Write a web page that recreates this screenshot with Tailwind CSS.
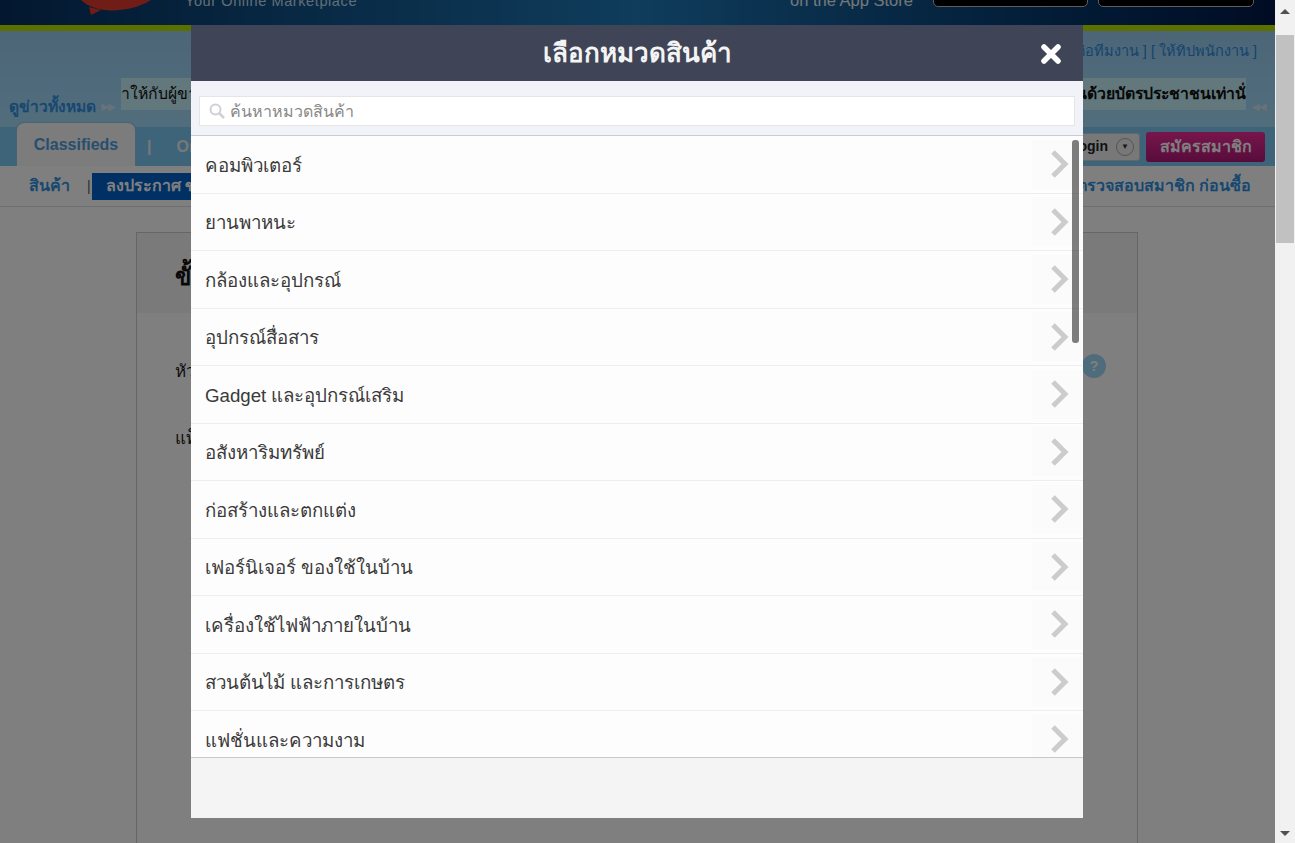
<!DOCTYPE html>
<html lang="th">
  <head>
    <meta charset="UTF-8" />
    <title>เลือกหมวดสินค้า</title>
    <script src="https://cdn.jsdelivr.net/npm/@tailwindcss/browser@4"></script>
  </head>
  <body class="h-[843px] w-[1295px] overflow-hidden bg-white font-['Liberation_Sans','Noto_Sans',sans-serif]">
    <div class="relative flex h-[843px] w-[1295px]">
      <!-- Page behind the dialog -->
      <div class="flex h-[843px] w-[1275px] flex-col overflow-hidden">
        <!-- Top banner -->
        <div class="relative h-[25px] shrink-0 bg-gradient-to-r from-[#06305f] via-[#1f7ab8] to-[#021848]">
          <svg class="absolute left-[75px] top-0 h-[16px] w-[80px]" viewBox="0 0 80 16">
            <path d="M6 0 C14 8 30 12 44 10 C58 9 68 5 76 0 Z M14 7 L16 15 L26 10 Z" fill="#e03a30" />
          </svg>
          <span class="absolute left-[185px] top-[-9px] text-[14.5px] tracking-[0.6px] text-[#c4dcec]">Your Online Marketplace</span>
          <span class="absolute left-[790px] top-[-12px] text-[16.5px] text-[#e8eef4]">on the App Store</span>
          <div class="absolute left-[933px] top-[-20px] flex h-[27px] w-[155px] items-end justify-center overflow-hidden rounded-[5px] border border-[#bbb] bg-black pb-[7px] text-[22px] font-bold leading-[22px] text-white">App Store</div>
          <div class="absolute left-[1098px] top-[-20px] flex h-[27px] w-[156px] items-end justify-center overflow-hidden rounded-[5px] border border-[#bbb] bg-black pb-[7px] text-[22px] font-bold leading-[22px] text-white">Google Play</div>
        </div>
        <div class="h-[6px] shrink-0 bg-[#b8e000]"></div>
        <!-- News band -->
        <div class="flex h-[96px] shrink-0 flex-col bg-gradient-to-b from-[#98ccf0] to-[#a4dcfa]">
          <div class="flex h-[42px] items-center justify-end pr-[18px] text-[14.5px] text-[#2a88dc]">[ แจ้งปัญหาต่อทีมงาน ] [ ให้ทิปพนักงาน ]</div>
          <div class="mt-[5px] flex items-end pl-[9px]">
            <span class="mb-[-8px] w-[86px] whitespace-nowrap text-[15.5px] font-bold text-[#3090e0]">ดูข่าวทั้งหมด</span>
            <span class="mb-[-4px] w-[26px] pl-[6px] text-[10px] tracking-[-1px] text-[#d0e4f0]">▶▶</span>
            <div class="flex h-[32px] w-[1125px] items-center justify-between overflow-hidden bg-[#c4f0f8] text-[15.8px] text-[#111]">
              <span>าให้กับผู้ขาย</span>
              <span class="font-bold">ยืนยันตัวตนด้วยบัตรประชาชนเท่านั่</span>
            </div>
            <span class="mb-[-4px] pl-[6px] text-[10px] tracking-[-1px] text-[#d0e4f0]">◀◀</span>
          </div>
        </div>
        <!-- Tabs -->
        <div class="flex h-[39px] shrink-0 items-end bg-[#7cc8f4] pl-[16px]">
          <div class="mt-[-5px] flex h-[44px] w-[120px] items-center justify-center rounded-t-[8px] border border-b-0 border-[#8cc4e8] bg-[#f8f8f8] text-[16px] font-bold text-[#4f9ee0]">Classifieds</div>
          <div class="flex h-[39px] items-center pl-[11px] text-[16px] font-bold text-[#f0f0f0]">|</div>
          <div class="flex h-[39px] items-center pl-[25px] text-[16px] font-bold text-[#f0f0f0]">Online</div>
          <div class="ml-auto flex h-[39px] items-center gap-[6px] pr-[10px]">
            <div class="flex h-[28px] w-[60px] items-center justify-end gap-[8px] rounded-[3px] border border-[#ccc] bg-[#f0f0f0] pr-[5px] text-[14px] font-bold text-[#222]">
              Login
              <span class="flex h-[18px] w-[18px] shrink-0 items-center justify-center rounded-full border border-[#aaa] text-[8px] text-[#333]">▼</span>
            </div>
            <div class="flex h-[30px] w-[119px] items-center justify-center rounded-[3px] bg-gradient-to-b from-[#f02c98] to-[#b01878] text-[16px] font-bold text-white">สมัครสมาชิก</div>
          </div>
        </div>
        <!-- Sub navigation -->
        <div class="flex h-[41px] shrink-0 items-center border-b border-[#ddd] bg-white pl-[29px] pr-[24px] text-[16px] font-bold text-[#3090e0]">
          <span>สินค้า</span>
          <span class="pl-[17px] text-[14px] font-normal text-[#555]">|</span>
          <div class="ml-[1px] flex h-[27px] w-[99px] items-center overflow-hidden whitespace-nowrap bg-[#0060c8] pl-[14px] text-white">ลงประกาศ ขาย</div>
          <span class="ml-auto">ตรวจสอบสมาชิก ก่อนซื้อ</span>
        </div>
        <!-- Card -->
        <div class="ml-[136px] mt-[25px] w-[1002px] flex-1 border border-b-0 border-[#cccccc] bg-white">
          <div class="flex h-[80px] items-center bg-[#f4f4f4] pl-[38px] pt-[8px] text-[24px] font-bold text-[#111]">ขั้นตอนที่ 1</div>
          <div class="relative pl-[38px] pt-[46px] text-[17px] text-[#222]">
            <div>หัวข้อประกาศ</div>
            <div class="pt-[41px]">แท็ก</div>
            <div class="absolute left-[945px] top-[41px] flex h-[24px] w-[24px] items-center justify-center rounded-full bg-[#9fd8f8] text-[14px] font-bold text-white">?</div>
          </div>
        </div>
      </div>
      <!-- Browser scrollbar -->
      <div class="flex h-[843px] w-[20px] shrink-0 flex-col items-center justify-between bg-[#f1f1f1] pb-[7px] pt-[9px]">
        <div class="h-0 w-0 border-x-[5px] border-b-[5px] border-x-transparent border-b-[#505050]"></div>
        <div class="absolute right-[1px] top-[35px] h-[208px] w-[18px] bg-[#c1c1c1]"></div>
        <div class="h-0 w-0 border-x-[5px] border-t-[5px] border-x-transparent border-t-[#505050]"></div>
      </div>
      <!-- Backdrop -->
      <div class="absolute left-0 top-0 h-[843px] w-[1275px] bg-black/50"></div>
      <!-- Dialog -->
      <div class="absolute left-[191px] top-[25px] flex h-[793px] w-[892px] flex-col bg-[#f4f4f4]">
        <div class="relative flex h-[56px] shrink-0 items-center justify-center bg-[#3f4456] text-[26px] font-bold text-[#f4f4f4]">
          เลือกหมวดสินค้า
          <svg class="absolute left-[850px] top-[19px] h-[20px] w-[20px]" viewBox="0 0 20 20">
            <path d="M3 3 L17 17 M17 3 L3 17" stroke="#ffffff" stroke-width="5.5" stroke-linecap="round" fill="none" />
          </svg>
        </div>
        <div class="flex h-[55px] shrink-0 items-center border-b border-[#cccccc] bg-[#f2f3f8] px-[8px] pt-[6px]">
          <div class="flex h-[30px] w-full items-center gap-[5px] border border-[#e5e5e5] bg-white pl-[9px] text-[16px] text-[#888]">
            <svg class="h-[16px] w-[16px]" viewBox="0 0 16 16">
              <circle cx="6.5" cy="6.5" r="5" stroke="#cfcfd6" stroke-width="2" fill="none" />
              <path d="M10.5 10.5 L15 15" stroke="#cfcfd6" stroke-width="2.5" />
            </svg>
            <span class="pt-[1px]">ค้นหาหมวดสินค้า</span>
          </div>
        </div>
        <!-- Category list -->
        <div class="relative h-[622px] shrink-0 overflow-hidden border-b border-[#c8c8c8] bg-[#fdfdfd] text-[18.7px] text-[#3a3a3a]">
          <div class="flex h-[57.5px] items-center justify-between border-b border-[#eeeeee] pl-[14px]">
            <span class="pt-[3px]">คอมพิวเตอร์</span>
            <div class="mr-[1px] flex h-[49px] w-[50px] items-center bg-[#fbfbfb] pl-[18px]"><svg class="h-[32px] w-[20px]" viewBox="0 0 20 32"><path d="M3 4 L15 16 L3 28" stroke="#cccccc" stroke-width="5" fill="none" /></svg></div>
          </div>
          <div class="flex h-[57.5px] items-center justify-between border-b border-[#eeeeee] pl-[14px]">
            <span class="pt-[3px]">ยานพาหนะ</span>
            <div class="mr-[1px] flex h-[49px] w-[50px] items-center bg-[#fbfbfb] pl-[18px]"><svg class="h-[32px] w-[20px]" viewBox="0 0 20 32"><path d="M3 4 L15 16 L3 28" stroke="#cccccc" stroke-width="5" fill="none" /></svg></div>
          </div>
          <div class="flex h-[57.5px] items-center justify-between border-b border-[#eeeeee] pl-[14px]">
            <span class="pt-[3px]">กล้องและอุปกรณ์</span>
            <div class="mr-[1px] flex h-[49px] w-[50px] items-center bg-[#fbfbfb] pl-[18px]"><svg class="h-[32px] w-[20px]" viewBox="0 0 20 32"><path d="M3 4 L15 16 L3 28" stroke="#cccccc" stroke-width="5" fill="none" /></svg></div>
          </div>
          <div class="flex h-[57.5px] items-center justify-between border-b border-[#eeeeee] pl-[14px]">
            <span class="pt-[3px]">อุปกรณ์สื่อสาร</span>
            <div class="mr-[1px] flex h-[49px] w-[50px] items-center bg-[#fbfbfb] pl-[18px]"><svg class="h-[32px] w-[20px]" viewBox="0 0 20 32"><path d="M3 4 L15 16 L3 28" stroke="#cccccc" stroke-width="5" fill="none" /></svg></div>
          </div>
          <div class="flex h-[57.5px] items-center justify-between border-b border-[#eeeeee] pl-[14px]">
            <span class="pt-[3px]">Gadget และอุปกรณ์เสริม</span>
            <div class="mr-[1px] flex h-[49px] w-[50px] items-center bg-[#fbfbfb] pl-[18px]"><svg class="h-[32px] w-[20px]" viewBox="0 0 20 32"><path d="M3 4 L15 16 L3 28" stroke="#cccccc" stroke-width="5" fill="none" /></svg></div>
          </div>
          <div class="flex h-[57.5px] items-center justify-between border-b border-[#eeeeee] pl-[14px]">
            <span class="pt-[3px]">อสังหาริมทรัพย์</span>
            <div class="mr-[1px] flex h-[49px] w-[50px] items-center bg-[#fbfbfb] pl-[18px]"><svg class="h-[32px] w-[20px]" viewBox="0 0 20 32"><path d="M3 4 L15 16 L3 28" stroke="#cccccc" stroke-width="5" fill="none" /></svg></div>
          </div>
          <div class="flex h-[57.5px] items-center justify-between border-b border-[#eeeeee] pl-[14px]">
            <span class="pt-[3px]">ก่อสร้างและตกแต่ง</span>
            <div class="mr-[1px] flex h-[49px] w-[50px] items-center bg-[#fbfbfb] pl-[18px]"><svg class="h-[32px] w-[20px]" viewBox="0 0 20 32"><path d="M3 4 L15 16 L3 28" stroke="#cccccc" stroke-width="5" fill="none" /></svg></div>
          </div>
          <div class="flex h-[57.5px] items-center justify-between border-b border-[#eeeeee] pl-[14px]">
            <span class="pt-[3px]">เฟอร์นิเจอร์ ของใช้ในบ้าน</span>
            <div class="mr-[1px] flex h-[49px] w-[50px] items-center bg-[#fbfbfb] pl-[18px]"><svg class="h-[32px] w-[20px]" viewBox="0 0 20 32"><path d="M3 4 L15 16 L3 28" stroke="#cccccc" stroke-width="5" fill="none" /></svg></div>
          </div>
          <div class="flex h-[57.5px] items-center justify-between border-b border-[#eeeeee] pl-[14px]">
            <span class="pt-[3px]">เครื่องใช้ไฟฟ้าภายในบ้าน</span>
            <div class="mr-[1px] flex h-[49px] w-[50px] items-center bg-[#fbfbfb] pl-[18px]"><svg class="h-[32px] w-[20px]" viewBox="0 0 20 32"><path d="M3 4 L15 16 L3 28" stroke="#cccccc" stroke-width="5" fill="none" /></svg></div>
          </div>
          <div class="flex h-[57.5px] items-center justify-between border-b border-[#eeeeee] pl-[14px]">
            <span class="pt-[3px]">สวนต้นไม้ และการเกษตร</span>
            <div class="mr-[1px] flex h-[49px] w-[50px] items-center bg-[#fbfbfb] pl-[18px]"><svg class="h-[32px] w-[20px]" viewBox="0 0 20 32"><path d="M3 4 L15 16 L3 28" stroke="#cccccc" stroke-width="5" fill="none" /></svg></div>
          </div>
          <div class="flex h-[57.5px] items-center justify-between border-b border-[#eeeeee] pl-[14px]">
            <span class="pt-[3px]">แฟชั่นและความงาม</span>
            <div class="mr-[1px] flex h-[49px] w-[50px] items-center bg-[#fbfbfb] pl-[18px]"><svg class="h-[32px] w-[20px]" viewBox="0 0 20 32"><path d="M3 4 L15 16 L3 28" stroke="#cccccc" stroke-width="5" fill="none" /></svg></div>
          </div>
          <!-- list scrollbar -->
          <div class="absolute left-[881px] top-[4px] h-[203px] w-[7px] rounded-[3px] bg-black/50"></div>
        </div>
      </div>
    </div>
  </body>
</html>
